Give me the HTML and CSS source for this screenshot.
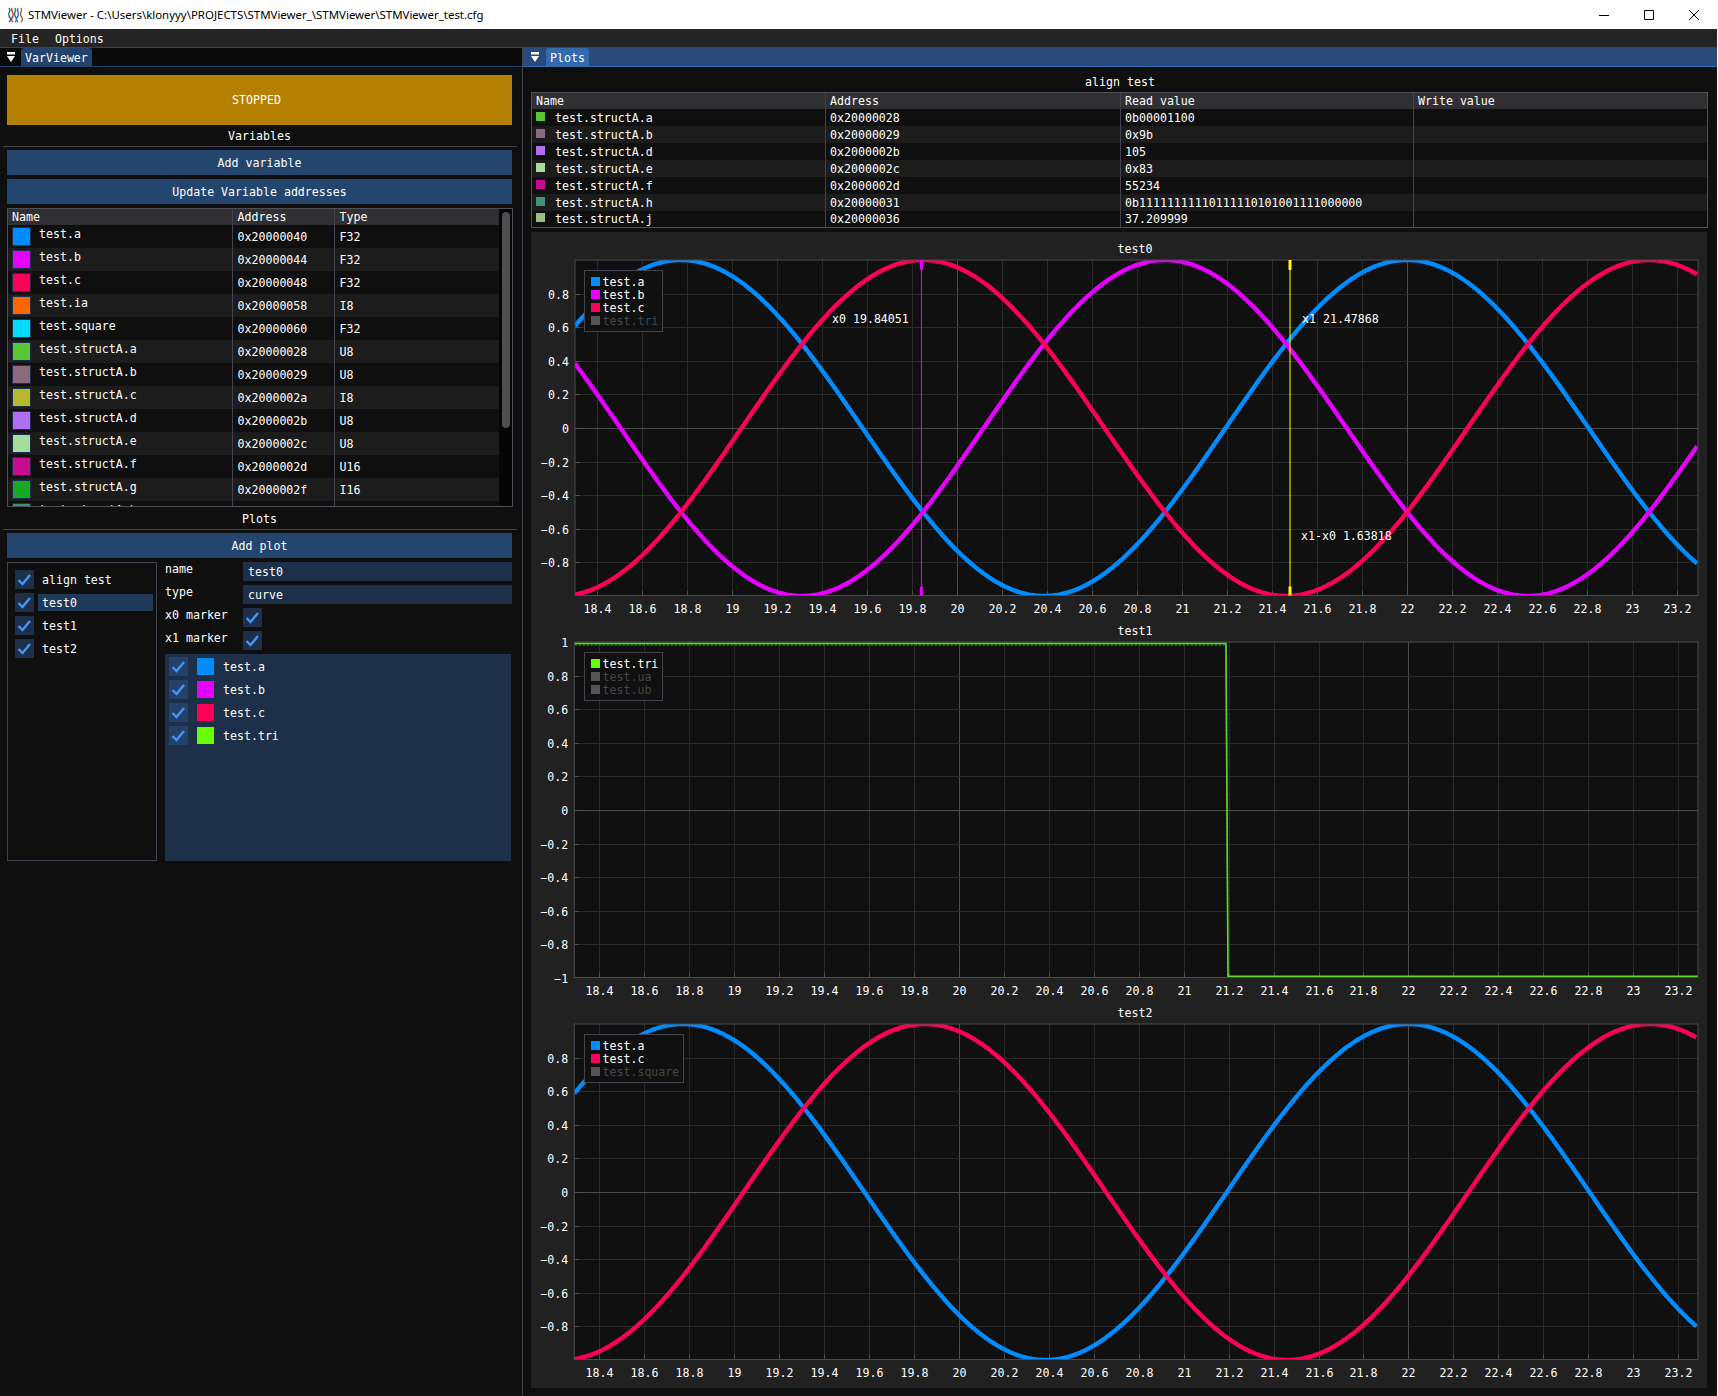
FILE: index.html
```html
<!DOCTYPE html>
<html lang="en">
<head>
  <meta charset="UTF-8">
  <title>STMViewer</title>
  <link rel="stylesheet" href="styles.css">
</head>
<body>

<div id="titlebar">
  <svg class="logo" viewBox="0 0 16 16">
    <path class="w1" d="M2 1c3 3-2 5 0 8s2 4 0 6"/>
    <path class="w2" d="M5 1c-2 3 3 5 1 8s-2 4 0 6"/>
    <path class="w3" d="M8 1c2 3-2 5 0 8s2 4 0 6"/>
    <path class="w4" d="M11 1c-2 3 2 5 0 8s-2 4 0 6"/>
    <path class="w5" d="M14 1c2 3-2 5 0 8s2 4 0 6"/>
  </svg>
  <span class="title-text">STMViewer - C:\Users\klonyyy\PROJECTS\STMViewer_\STMViewer\STMViewer_test.cfg</span>
  <div class="win-btns">
    <svg viewBox="0 0 10 10"><path d="M0 5.5h10"/></svg>
    <svg viewBox="0 0 10 10"><path d="M.5.5h9v9h-9z"/></svg>
    <svg viewBox="0 0 10 10"><path d="M0 0l10 10M10 0L0 10"/></svg>
  </div>
</div>

<div id="menubar">
  <span>File</span>
  <span>Options</span>
</div>

<div id="main">
  <div id="left">
    <div class="tabbar">
      <svg class="collapse" viewBox="0 0 8 10"><path d="M0 0h8v2.5H0zM0 4h8L4 10z"/></svg>
      <span class="tab">VarViewer</span>
    </div>

    <div class="stopped">STOPPED</div>
    <div class="section">Variables</div>
    <div class="sep"></div>
    <div class="btn first">Add variable</div>
    <div class="btn">Update Variable addresses</div>

    <div class="var-wrap">
      <table class="var-table">
        <thead>
          <tr><th class="col-name">Name</th><th class="col-addr">Address</th><th>Type</th></tr>
        </thead>
        <tbody>
          <tr><td><span class="sw c-a"></span><span class="vname">test.a</span></td><td class="low">0x20000040</td><td class="low">F32</td></tr>
          <tr><td><span class="sw c-b"></span><span class="vname">test.b</span></td><td class="low">0x20000044</td><td class="low">F32</td></tr>
          <tr><td><span class="sw c-c"></span><span class="vname">test.c</span></td><td class="low">0x20000048</td><td class="low">F32</td></tr>
          <tr><td><span class="sw c-ia"></span><span class="vname">test.ia</span></td><td class="low">0x20000058</td><td class="low">I8</td></tr>
          <tr><td><span class="sw c-sq"></span><span class="vname">test.square</span></td><td class="low">0x20000060</td><td class="low">F32</td></tr>
          <tr><td><span class="sw c-sa"></span><span class="vname">test.structA.a</span></td><td class="low">0x20000028</td><td class="low">U8</td></tr>
          <tr><td><span class="sw c-sb"></span><span class="vname">test.structA.b</span></td><td class="low">0x20000029</td><td class="low">U8</td></tr>
          <tr><td><span class="sw c-sc"></span><span class="vname">test.structA.c</span></td><td class="low">0x2000002a</td><td class="low">I8</td></tr>
          <tr><td><span class="sw c-sd"></span><span class="vname">test.structA.d</span></td><td class="low">0x2000002b</td><td class="low">U8</td></tr>
          <tr><td><span class="sw c-se"></span><span class="vname">test.structA.e</span></td><td class="low">0x2000002c</td><td class="low">U8</td></tr>
          <tr><td><span class="sw c-sf"></span><span class="vname">test.structA.f</span></td><td class="low">0x2000002d</td><td class="low">U16</td></tr>
          <tr><td><span class="sw c-sg"></span><span class="vname">test.structA.g</span></td><td class="low">0x2000002f</td><td class="low">I16</td></tr>
          <tr><td><span class="sw c-sh"></span><span class="vname">test.structA.h</span></td><td class="low">0x20000031</td><td class="low">U8</td></tr>
        </tbody>
      </table>
      <div class="scrollbar"><div class="grab"></div></div>
    </div>

    <div class="section plots-label">Plots</div>
    <div class="sep"></div>
    <div class="btn first">Add plot</div>

    <div class="plot-setup">
      <div class="plot-list">
        <div class="row"><span class="check"><svg viewBox="0 0 19 19"><path d="M3.5 10l4 4 7.5-9"/></svg></span><span class="item">align test</span></div>
        <div class="row"><span class="check"><svg viewBox="0 0 19 19"><path d="M3.5 10l4 4 7.5-9"/></svg></span><span class="item selected">test0</span></div>
        <div class="row"><span class="check"><svg viewBox="0 0 19 19"><path d="M3.5 10l4 4 7.5-9"/></svg></span><span class="item">test1</span></div>
        <div class="row"><span class="check"><svg viewBox="0 0 19 19"><path d="M3.5 10l4 4 7.5-9"/></svg></span><span class="item">test2</span></div>
      </div>
      <div class="plot-form">
        <div class="field"><label>name</label><span class="input">test0</span></div>
        <div class="field"><label>type</label><span class="input">curve</span></div>
        <div class="field"><label class="mid">x0 marker</label><span class="check"><svg viewBox="0 0 19 19"><path d="M3.5 10l4 4 7.5-9"/></svg></span></div>
        <div class="field"><label class="mid">x1 marker</label><span class="check"><svg viewBox="0 0 19 19"><path d="M3.5 10l4 4 7.5-9"/></svg></span></div>
        <div class="series">
          <div class="row"><span class="check"><svg viewBox="0 0 19 19"><path d="M3.5 10l4 4 7.5-9"/></svg></span><span class="sw c-a"></span><span>test.a</span></div>
          <div class="row"><span class="check"><svg viewBox="0 0 19 19"><path d="M3.5 10l4 4 7.5-9"/></svg></span><span class="sw c-b"></span><span>test.b</span></div>
          <div class="row"><span class="check"><svg viewBox="0 0 19 19"><path d="M3.5 10l4 4 7.5-9"/></svg></span><span class="sw c-c"></span><span>test.c</span></div>
          <div class="row"><span class="check"><svg viewBox="0 0 19 19"><path d="M3.5 10l4 4 7.5-9"/></svg></span><span class="sw c-tri"></span><span>test.tri</span></div>
        </div>
      </div>
    </div>
  </div>

  <div id="right">
    <div class="tabbar active">
      <svg class="collapse" viewBox="0 0 8 10"><path d="M0 0h8v2.5H0zM0 4h8L4 10z"/></svg>
      <span class="tab">Plots</span>
    </div>

    <div class="table-title">align test</div>
    <table class="watch-table">
      <thead>
        <tr><th class="w-name">Name</th><th class="w-addr">Address</th><th class="w-read">Read value</th><th>Write value</th></tr>
      </thead>
      <tbody>
        <tr><td><span class="dot c-sa"></span>test.structA.a</td><td>0x20000028</td><td>0b00001100</td><td></td></tr>
        <tr><td><span class="dot c-sb"></span>test.structA.b</td><td>0x20000029</td><td>0x9b</td><td></td></tr>
        <tr><td><span class="dot c-sd"></span>test.structA.d</td><td>0x2000002b</td><td>105</td><td></td></tr>
        <tr><td><span class="dot c-se"></span>test.structA.e</td><td>0x2000002c</td><td>0x83</td><td></td></tr>
        <tr><td><span class="dot c-sf"></span>test.structA.f</td><td>0x2000002d</td><td>55234</td><td></td></tr>
        <tr><td><span class="dot c-sh"></span>test.structA.h</td><td>0x20000031</td><td>0b11111111110111110101001111000000</td><td></td></tr>
        <tr><td><span class="dot c-sj"></span>test.structA.j</td><td>0x20000036</td><td>37.209999</td><td></td></tr>
      </tbody>
    </table>

    <div id="plots"></div>
  </div>
</div>

<script src="plots.js"></script>
</body>
</html>
```

FILE: styles.css
```css
* {
  box-sizing: border-box;
}

html, body {
  height: 100%;
}

body {
  margin: 0;
  width: 1717px;
  height: 1396px;
  overflow: hidden;
  background-color: #0f0f0f;
  color: #ffffff;
  font-family: "DejaVu Sans Mono", monospace;
  font-size: 11.6px;
  line-height: 18px;
  display: flex;
  flex-direction: column;
}

html {
  background-color: #ffffff;
}

/* window title */
#titlebar {
  height: 29px;
  flex: none;
  background-color: #ffffff;
  color: #000000;
  display: flex;
  align-items: center;
  padding-left: 7px;
  font-family: "Noto Sans", sans-serif;
  font-size: 11.45px;
}

.logo {
  width: 16px;
  height: 16px;
  margin-right: 5px;
}

.logo path {
  fill: none;
  stroke-width: 1.4;
}

.w1 { stroke: #44607a; }
.w2 { stroke: #d03030; }
.w3 { stroke: #209050; }
.w4 { stroke: #2f6fd0; }
.w5 { stroke: #b06a10; }

.win-btns {
  margin-left: auto;
  display: flex;
  gap: 35px;
  padding-right: 18px;
}

.win-btns svg {
  width: 10px;
  height: 10px;
  overflow: visible;
}

.win-btns path {
  fill: none;
  stroke: #000000;
  stroke-width: 1;
}

#menubar {
  height: 19px;
  flex: none;
  background-color: #242424;
  border-bottom: 1px solid #43434f;
  padding: 1px 0 0 11px;
  display: flex;
  gap: 16px;
  align-items: center;
}

#main {
  flex: 1;
  display: flex;
  min-height: 0;
}

.tabbar {
  height: 19px;
  background-color: #0a0a0a;
  border-bottom: 1px solid #24416a;
  display: flex;
  align-items: flex-end;
  padding-left: 7px;
}

.tabbar.active {
  background-color: #294a7a;
  border-bottom-color: #3369ad;
  padding-left: 8px;
}

.collapse {
  width: 8px;
  height: 10px;
  margin-right: 6px;
  margin-bottom: 4px;
  fill: #ffffff;
}

.tab {
  height: 18px;
  line-height: 20px;
  padding: 0 4px;
  background-color: #23426c;
  border-radius: 3px 3px 0 0;
}

.tabbar.active .tab {
  background-color: #3369ad;
  margin-left: 1px;
}

/* left panel */
#left {
  width: 523px;
  flex: none;
  padding: 0 7px;
  border-right: 1px solid #43434f;
}

#left .tabbar {
  margin: 0 -7px;
}

.stopped {
  margin-top: 8px;
  width: 505px;
  height: 50px;
  line-height: 50px;
  background-color: #b58002;
  text-align: center;
  padding-right: 6px;
}

.section {
  width: 505px;
  height: 21px;
  line-height: 22px;
  text-align: center;
}

.plots-label {
  height: 22px;
  line-height: 25px;
}

.sep {
  margin-left: -4px;
  width: 514px;
  height: 1px;
  background-color: #43434f;
}

.btn {
  width: 505px;
  height: 25px;
  line-height: 27px;
  margin-top: 4px;
  background-color: #24456d;
  text-align: center;
}

.btn.first {
  margin-top: 3px;
}

.var-wrap {
  margin-top: 4px;
  width: 506px;
  height: 299px;
  border: 1px solid #4f4f59;
  display: flex;
  overflow: hidden;
}

.var-table {
  width: 491px;
  flex: none;
  table-layout: fixed;
  border-collapse: collapse;
  align-self: flex-start;
}

.var-table th {
  height: 16px;
  line-height: 16px;
  background-color: #303033;
  font-weight: normal;
  text-align: left;
  padding: 0 0 0 5px;
  border-right: 1px solid #43434f;
}

.var-table th:last-child,
.var-table td:last-child {
  border-right: none;
}

.var-table .col-name {
  width: 224px;
  padding-left: 4px;
}

.var-table .col-addr {
  width: 102px;
}

.var-table td {
  height: 23px;
  padding: 0 0 0 4px;
  border-right: 1px solid #43434f;
  vertical-align: top;
  white-space: nowrap;
}

.var-table td.low {
  padding: 3px 0 0 5px;
}

.var-table tbody tr:nth-child(even),
.watch-table tbody tr:nth-child(even) {
  background-color: #1c1c1c;
}

.sw {
  display: inline-block;
  width: 19px;
  height: 19px;
  border: 1px solid #1d2f49;
  flex: none;
}

.var-table .sw {
  margin-top: 2px;
  margin-right: 8px;
  vertical-align: top;
}

.vname {
  display: inline-block;
  vertical-align: top;
}

.scrollbar {
  flex: 1;
  background-color: #050505;
  padding: 3px 3px 0 3px;
}

.grab {
  width: 8px;
  height: 216px;
  background-color: #4f4f4f;
  border-radius: 4px;
}

.c-a { background-color: #008cff; }
.c-b { background-color: #e600ff; }
.c-c { background-color: #ff0059; }
.c-ia { background-color: #ff6600; }
.c-sq { background-color: #00dcff; }
.c-sa { background-color: #59c436; }
.c-sb { background-color: #8a6a7c; }
.c-sc { background-color: #b8b82f; }
.c-sd { background-color: #b06ef0; }
.c-se { background-color: #a6dc9c; }
.c-sf { background-color: #c80c90; }
.c-sg { background-color: #18a828; }
.c-sh { background-color: #43917a; }
.c-sj { background-color: #9cbc84; }
.c-tri { background-color: #66ff00; }

.plot-setup {
  margin-top: 4px;
  display: flex;
  gap: 8px;
}

.plot-list {
  width: 150px;
  height: 299px;
  border: 1px solid #43434f;
  padding: 7px 3px 0 7px;
  display: flex;
  flex-direction: column;
  gap: 4px;
}

.row {
  display: flex;
  align-items: center;
  height: 19px;
}

.check {
  width: 19px;
  height: 19px;
  flex: none;
  background-color: #1d2f49;
}

.check svg {
  display: block;
  width: 19px;
  height: 19px;
  fill: none;
  stroke: #4296fa;
  stroke-width: 2.4;
}

.item {
  flex: 1;
  height: 17px;
  line-height: 19px;
  margin-left: 4px;
  padding-left: 4px;
}

.item.selected {
  background-color: #1f3958;
}

.plot-form {
  width: 347px;
}

.field {
  display: flex;
  height: 19px;
  margin-bottom: 4px;
}

.field label {
  width: 78px;
  flex: none;
  line-height: 14px;
}

.field label.mid {
  line-height: 15px;
}

.input {
  flex: 1;
  background-color: #1d2f49;
  padding: 1px 0 0 5px;
}

.series {
  width: 346px;
  height: 207px;
  background-color: #1d2f49;
  padding: 3px 4px;
  display: flex;
  flex-direction: column;
  gap: 4px;
}

.series .check {
  background-color: #24416a;
}

.series .sw {
  margin: 0 8px 0 8px;
}

/* right panel */
#right {
  flex: 1;
  min-width: 0;
}

.table-title {
  height: 25px;
  line-height: 30px;
  text-align: center;
}

.watch-table {
  margin-left: 8px;
  width: 1177px;
  table-layout: fixed;
  border-collapse: separate;
  border-spacing: 0;
  border: 1px solid #4f4f59;
}

.watch-table th {
  height: 16px;
  line-height: 16px;
  font-weight: normal;
  text-align: left;
  padding: 0 0 0 4px;
  background-color: #303033;
  border-right: 1px solid #43434f;
}

.watch-table td {
  height: 17px;
  line-height: 16px;
  padding: 1px 0 0 4px;
  border-right: 1px solid #43434f;
  white-space: nowrap;
  overflow: hidden;
}

.watch-table th:last-child,
.watch-table td:last-child {
  border-right: none;
}

.watch-table tr:last-child td {
  height: 16px;
  line-height: 15px;
}

.watch-table .w-name { width: 294px; }
.watch-table .w-addr { width: 295px; }
.watch-table .w-read { width: 293px; }

.dot {
  display: inline-block;
  width: 9px;
  height: 9px;
  margin-right: 10px;
  vertical-align: 1px;
}

#plots {
  margin: 4px 0 0 8px;
  width: 1176px;
  height: 1156px;
  background-color: #212121;
}

#plots svg {
  display: block;
}

.plot-title,
.tick-label,
.legend-text,
.marker-label {
  fill: #ffffff;
  font-family: "DejaVu Sans Mono", monospace;
  font-size: 11.6px;
}

.plot-title {
  text-anchor: middle;
}

.tick-label.x {
  text-anchor: middle;
}

.tick-label.y {
  text-anchor: end;
}

.legend-text.off {
  fill: #454545;
}

.plot-bg {
  fill: #101010;
}

.frame {
  fill: none;
  stroke: #4a4a50;
  stroke-width: 1;
}

.grid {
  stroke: #2a2a2a;
  stroke-width: 1;
}

.grid.major {
  stroke: #4c4c4c;
}

.tickmark {
  stroke: #505050;
  stroke-width: 1;
}

.legend-box {
  fill: #101010;
  stroke: #43434f;
  stroke-width: 1;
}

.curve {
  fill: none;
  stroke-width: 4.4;
}
```

FILE: plots.js
```js
const NS = 'http://www.w3.org/2000/svg';

const BLUE = '#008cff';
const MAGENTA = '#e600ff';
const RED = '#ff0059';
const OFF = '#555555';

// three phase test signals, peak position in seconds
const PERIOD = 3.227;
const PEAK = 18.772;
const SIGNALS = {
  a: { color: BLUE, peak: PEAK },
  b: { color: MAGENTA, peak: PEAK + PERIOD * 2 / 3 },
  c: { color: RED, peak: PEAK + PERIOD / 3 }
};

const PLOTS = [
  {
    title: 'test0', titleX: 604, left: 44, zero: 426.3, unit: 225, legendW: 78,
    curves: ['a', 'b', 'c'], edgeLabels: false,
    legend: [['test.a', BLUE], ['test.b', MAGENTA], ['test.c', RED], ['test.tri', null]],
    markers: [
      { x: 19.84051, color: MAGENTA },
      { x: 21.47868, color: '#ffff00' }
    ],
    labels: [
      ['x0 19.84051', 301, 91],
      ['x1 21.47868', 771, 91],
      ['x1-x0 1.63818', 770, 308]
    ]
  },
  {
    title: 'test1', titleX: 604, left: 43.3, zero: 428, unit: 224.7, legendW: 78,
    curves: [], square: true, edgeLabels: true,
    legend: [['test.tri', '#66ff00'], ['test.ua', null], ['test.ub', null]],
    markers: [], labels: []
  },
  {
    title: 'test2', titleX: 604, left: 43.3, zero: 428, unit: 224.7, legendW: 99,
    curves: ['a', 'c'], edgeLabels: false,
    legend: [['test.a', BLUE], ['test.c', RED], ['test.square', null]],
    markers: [], labels: []
  }
];

const RIGHT = 1167;
const TOP = 28;
const HEIGHT = 335.5;
const AMP = 168;

function el(name, attrs, text) {
  const node = document.createElementNS(NS, name);
  for (const key in attrs) {
    node.setAttribute(key, attrs[key]);
  }
  if (text !== undefined) {
    node.textContent = text;
  }
  return node;
}

function tickText(v) {
  const s = String(Number(Math.abs(v).toFixed(1)));
  return v < -0.01 ? '\u2212' + s : s;
}

function drawPlot(cfg, index) {
  const svg = el('svg', { width: 1176, height: 382 });
  const bottom = TOP + HEIGHT;
  const clipId = 'clip' + index;
  const px = v => cfg.zero + (v - 20) * cfg.unit;
  const py = v => TOP + (1 - v) * AMP;

  const clip = el('clipPath', { id: clipId });
  clip.appendChild(el('rect', { x: cfg.left, y: TOP, width: RIGHT - cfg.left, height: HEIGHT }));
  svg.appendChild(clip);

  svg.appendChild(el('text', { class: 'plot-title', x: cfg.titleX, y: 21 }, cfg.title));
  svg.appendChild(el('rect', { class: 'plot-bg', x: cfg.left, y: TOP, width: RIGHT - cfg.left, height: HEIGHT }));

  // grid and ticks
  for (let i = 0; i <= 24; i++) {
    const v = 18.4 + i * 0.2;
    const x = Math.round(px(v)) + 0.5;
    const major = Math.abs(v - 20) < 0.01 || Math.abs(v - 22) < 0.01;
    svg.appendChild(el('line', { class: major ? 'grid major' : 'grid', x1: x, x2: x, y1: TOP, y2: bottom }));
    svg.appendChild(el('line', { class: 'tickmark', x1: x, x2: x, y1: bottom - (major ? 9 : 5), y2: bottom }));
    svg.appendChild(el('text', { class: 'tick-label x', x: x, y: bottom + 17 }, tickText(v)));
  }
  for (let i = -5; i <= 5; i++) {
    const v = i * 0.2;
    const edge = Math.abs(i) === 5;
    if (edge && !cfg.edgeLabels) {
      continue;
    }
    const y = Math.round(py(v)) + 0.5;
    if (!edge) {
      svg.appendChild(el('line', { class: i === 0 ? 'grid major' : 'grid', x1: cfg.left, x2: RIGHT, y1: y, y2: y }));
      svg.appendChild(el('line', { class: 'tickmark', x1: cfg.left, x2: cfg.left + (i === 0 ? 10 : 5), y1: y, y2: y }));
    }
    svg.appendChild(el('text', { class: 'tick-label y', x: cfg.left - 6, y: y + 4 }, tickText(v)));
  }

  // curves
  const data = el('g', { 'clip-path': 'url(#' + clipId + ')' });
  cfg.curves.forEach(key => {
    const s = SIGNALS[key];
    const points = [];
    for (let x = cfg.left; x <= RIGHT; x += 2) {
      const t = 20 + (x - cfg.zero) / cfg.unit;
      const y = py(Math.cos(2 * Math.PI * (t - s.peak) / PERIOD));
      points.push(x.toFixed(1) + ',' + y.toFixed(1));
    }
    data.appendChild(el('polyline', { class: 'curve', stroke: s.color, points: points.join(' ') }));
  });
  if (cfg.square) {
    const d = 'M' + cfg.left + ' ' + (TOP + 1.3) + 'H695L697 ' + (bottom - 1.2) + 'H' + RIGHT;
    data.appendChild(el('path', { d: d, fill: 'none', stroke: '#2f8a10', 'stroke-width': 1.5, 'stroke-dasharray': '3 1', transform: 'translate(0 1.5)' }));
    data.appendChild(el('path', { d: d, fill: 'none', stroke: '#5fd724', 'stroke-width': 1.6 }));
  }
  svg.appendChild(data);

  svg.appendChild(el('rect', { class: 'frame', x: cfg.left, y: TOP, width: RIGHT - cfg.left, height: HEIGHT }));

  // drag markers
  cfg.markers.forEach(m => {
    const x = px(m.x);
    svg.appendChild(el('line', { x1: x, x2: x, y1: TOP, y2: bottom, stroke: m.color, 'stroke-width': 1 }));
    svg.appendChild(el('rect', { x: x - 1.5, y: TOP, width: 3, height: 10, fill: m.color }));
    svg.appendChild(el('rect', { x: x - 1.5, y: bottom - 9, width: 3, height: 9, fill: m.color }));
  });
  cfg.labels.forEach(l => {
    svg.appendChild(el('text', { class: 'marker-label', x: l[1], y: l[2] }, l[0]));
  });

  // legend
  const lx = 53.5;
  const ly = TOP + 10.5;
  svg.appendChild(el('rect', { class: 'legend-box', x: lx, y: ly, width: cfg.legendW, height: cfg.legend.length * 13 + 9 }));
  cfg.legend.forEach((item, i) => {
    const y = ly + 6.5 + i * 13;
    svg.appendChild(el('rect', { x: lx + 6.5, y: y, width: 9, height: 9, fill: item[1] || OFF }));
    svg.appendChild(el('text', { class: item[1] ? 'legend-text' : 'legend-text off', x: lx + 18, y: y + 9 }, item[0]));
  });

  return svg;
}

const holder = document.getElementById('plots');
PLOTS.forEach((cfg, i) => holder.appendChild(drawPlot(cfg, i)));
```
